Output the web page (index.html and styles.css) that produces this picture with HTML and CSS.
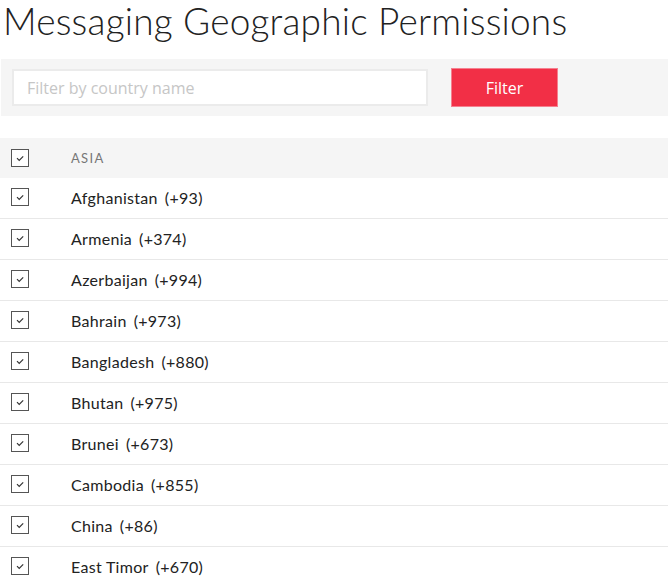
FILE: index.html
```html
<!DOCTYPE html>
<html lang="en">
<head>
<meta charset="utf-8">
<title>Messaging Geographic Permissions</title>
<link rel="stylesheet" href="styles.css">
</head>
<body>
<h1 class="title">Messaging Geographic Permissions</h1>
<form class="filter-bar">
  <input class="filter-input" type="text" placeholder="Filter by country name">
  <button class="filter-btn" type="button">Filter</button>
</form>
<div class="list">
  <div class="row head">
    <span class="cb"><svg viewBox="0 0 16 16"><path d="M5 8.2l2.2 2.2L11.2 6.4"/></svg></span>
    <span class="label">ASIA</span>
  </div>
  <div class="row"><span class="cb"><svg viewBox="0 0 16 16"><path d="M5 8.2l2.2 2.2L11.2 6.4"/></svg></span><span class="label">Afghanistan<span class="code">(+93)</span></span></div>
  <div class="row"><span class="cb"><svg viewBox="0 0 16 16"><path d="M5 8.2l2.2 2.2L11.2 6.4"/></svg></span><span class="label">Armenia<span class="code">(+374)</span></span></div>
  <div class="row"><span class="cb"><svg viewBox="0 0 16 16"><path d="M5 8.2l2.2 2.2L11.2 6.4"/></svg></span><span class="label">Azerbaijan<span class="code">(+994)</span></span></div>
  <div class="row"><span class="cb"><svg viewBox="0 0 16 16"><path d="M5 8.2l2.2 2.2L11.2 6.4"/></svg></span><span class="label">Bahrain<span class="code">(+973)</span></span></div>
  <div class="row"><span class="cb"><svg viewBox="0 0 16 16"><path d="M5 8.2l2.2 2.2L11.2 6.4"/></svg></span><span class="label">Bangladesh<span class="code">(+880)</span></span></div>
  <div class="row"><span class="cb"><svg viewBox="0 0 16 16"><path d="M5 8.2l2.2 2.2L11.2 6.4"/></svg></span><span class="label">Bhutan<span class="code">(+975)</span></span></div>
  <div class="row"><span class="cb"><svg viewBox="0 0 16 16"><path d="M5 8.2l2.2 2.2L11.2 6.4"/></svg></span><span class="label">Brunei<span class="code">(+673)</span></span></div>
  <div class="row"><span class="cb"><svg viewBox="0 0 16 16"><path d="M5 8.2l2.2 2.2L11.2 6.4"/></svg></span><span class="label">Cambodia<span class="code">(+855)</span></span></div>
  <div class="row"><span class="cb"><svg viewBox="0 0 16 16"><path d="M5 8.2l2.2 2.2L11.2 6.4"/></svg></span><span class="label">China<span class="code">(+86)</span></span></div>
  <div class="row"><span class="cb"><svg viewBox="0 0 16 16"><path d="M5 8.2l2.2 2.2L11.2 6.4"/></svg></span><span class="label">East Timor<span class="code">(+670)</span></span></div>
</div>
</body>
</html>
```

FILE: styles.css
```css
* { box-sizing: border-box; }
html, body { margin: 0; padding: 0; background: #fff; }
body {
  font-family: Lato, "Open Sans", "Liberation Sans", sans-serif;
  color: #222;
  overflow: hidden;
}
.title {
  margin: 0;
  padding: 0 0 0 3px;
  height: 59px;
  font-size: 37px;
  line-height: 42px;
  font-weight: 300;
  letter-spacing: 0.2px;
  color: #222;
  white-space: nowrap;
}
.filter-bar {
  margin: 0 0 0 1px;
  height: 57px;
  background: #f5f5f5;
  display: flex;
  align-items: center;
  padding: 0 0 0 11px;
  gap: 23px;
}
.filter-input {
  width: 416px;
  height: 37px;
  border: 2px solid #ebebeb;
  background: #fff;
  padding: 0 13px;
  font-family: "Open Sans", Lato, sans-serif;
  font-size: 16px;
  color: #333;
  outline: none;
}
.filter-input::placeholder { color: #c6c6c6; }
.filter-btn {
  width: 107px;
  height: 39px;
  border: 1px solid #f5808f;
  background: #f22f46;
  color: #fff;
  font-family: "Open Sans", Lato, sans-serif;
  font-size: 16px;
  padding: 0;
}
.list { margin-top: 22px; }
.row {
  display: flex;
  align-items: center;
  height: 41px;
  border-bottom: 1px solid #e8e8e8;
  padding-left: 11px;
  padding-bottom: 2px;
}
.row.head {
  height: 40px;
  background: #f5f5f5;
  border-bottom: none;
  padding-bottom: 1px;
}
.cb {
  width: 18px;
  height: 18px;
  border: 1px solid #555;
  background: #fff;
  display: flex;
  align-items: center;
  justify-content: center;
  flex: none;
}
.cb svg {
  width: 16px;
  height: 16px;
  fill: none;
  stroke: #333;
  stroke-width: 1.2;
}
.label {
  margin-left: 42px;
  font-size: 16px;
  color: #222;
  letter-spacing: 0.3px;
}
.code { margin-left: 7px; }
.head .label {
  font-size: 13px;
  color: #777;
  letter-spacing: 1.3px;
}
```
